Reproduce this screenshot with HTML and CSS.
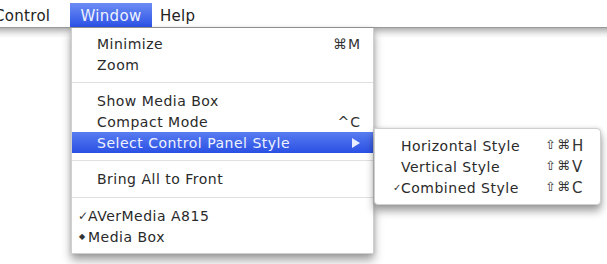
FILE: index.html
```html
<!DOCTYPE html>
<html>
<head>
<meta charset="utf-8">
<link rel="stylesheet" href="styles.css">
</head>
<body>
<div class="screen">
  <div class="menubar">
    <span class="mb-item mb-control">Control</span>
    <span class="mb-item mb-active">Window</span>
    <span class="mb-item">Help</span>
  </div>
  <div class="desk"></div>

  <div class="menu main-menu">
    <div class="row"><span class="label">Minimize</span><span class="key">⌘M</span></div>
    <div class="row"><span class="label">Zoom</span></div>
    <div class="sep"></div>
    <div class="row"><span class="label">Show Media Box</span></div>
    <div class="row"><span class="label">Compact Mode</span><span class="key">^C</span></div>
    <div class="row row-hl"><span class="label">Select Control Panel Style</span><span class="arrow"></span></div>
    <div class="sep"></div>
    <div class="row"><span class="label">Bring All to Front</span></div>
    <div class="sep sep-wide"></div>
    <div class="row row-mark"><span class="mark">✓</span><span class="label">AVerMedia A815</span></div>
    <div class="row row-mark"><span class="mark mark-dia">◆</span><span class="label">Media Box</span></div>
  </div>

  <div class="menu sub-menu">
    <div class="row"><span class="smark"></span><span class="label">Horizontal Style</span><span class="skey"><span>⇧</span><span>⌘</span><span>H</span></span></div>
    <div class="row"><span class="smark"></span><span class="label">Vertical Style</span><span class="skey"><span>⇧</span><span>⌘</span><span>V</span></span></div>
    <div class="row"><span class="smark">✓</span><span class="label">Combined Style</span><span class="skey"><span>⇧</span><span>⌘</span><span>C</span></span></div>
  </div>
</div>
</body>
</html>
```

FILE: styles.css
```css
* { box-sizing: border-box; }
html, body { margin: 0; padding: 0; background: #fff; }
body {
  font-family: "DejaVu Sans", "Liberation Sans", sans-serif;
  font-size: 14px;
  color: #2a2a2a;
  width: 607px;
  height: 264px;
  overflow: hidden;
}
.screen {
  position: relative;
  width: 607px;
  height: 264px;
  overflow: hidden;
  background: #fff;
}
.menubar {
  height: 28px;
  display: flex;
  align-items: stretch;
  border-bottom: 1px solid #9a9a9a;
  background: #fff;
  font-size: 15px;
}
.mb-item {
  display: flex;
  align-items: center;
  padding: 2px 0 0;
  margin-top: 3px;
  height: 24px;
  color: #222;
  letter-spacing: 0.3px;
}
.mb-control { margin-left: -6px; width: 76px; }
.mb-active {
  background: linear-gradient(#6d8df4, #2c52e6);
  color: #eef2ff;
  width: 82px;
  justify-content: center;
}
.mb-active + .mb-item { margin-left: 8px; }
.desk {
  height: 10px;
  background: linear-gradient(#b4b4b4, #ececec 60%, #fff);
}
.menu {
  position: absolute;
  background: #fff;
  border: 1px solid #cfcfcf;
  box-shadow: 0 6px 9px rgba(0,0,0,0.38), 0 0 4px rgba(0,0,0,0.12);
  display: flex;
  flex-direction: column;
}
.main-menu {
  left: 71px;
  top: 28px;
  width: 303px;
  padding: 5px 0 6px;
  border-top: none;
}
.row {
  height: 21px;
  display: flex;
  align-items: center;
  padding: 0 12px 0 25px;
  white-space: nowrap;
}
.row .label { flex: 1; letter-spacing: 0.5px; }
.key { color: #333; letter-spacing: 1px; }
.row-hl {
  background: linear-gradient(#587cf0, #2a50e4);
  color: #eef2ff;
}
.arrow {
  width: 0; height: 0;
  border-top: 5px solid transparent;
  border-bottom: 5px solid transparent;
  border-left: 8px solid #e8eeff;
  margin-right: 1px;
}
.row-mark { padding-left: 6px; }
.mark {
  width: 10px;
  font-size: 12px;
  font-weight: bold;
  color: #333;
  text-align: left;
}
.mark-dia { font-size: 8px; padding-left: 1px; }
.sep {
  height: 15px;
  display: flex;
  align-items: center;
}
.sep-wide { height: 16px; }
.sep::before {
  content: "";
  flex: 1;
  height: 1px;
  background: #e0e0e0;
}
.sub-menu {
  left: 374px;
  top: 128px;
  width: 227px;
  padding: 6px 0 6px;
  border-radius: 0 4px 4px 4px;
}
.sub-menu .row { padding: 0 13px 0 18px; }
.smark { width: 8px; font-size: 10px; font-weight: bold; color: #333; }
.skey {
  display: flex;
  width: 42px;
  color: #333;
  font-size: 15px;
}
.skey span:nth-child(1) { width: 12px; font-size: 13px; }
.skey span:nth-child(2) { width: 15px; font-size: 13px; }
```
